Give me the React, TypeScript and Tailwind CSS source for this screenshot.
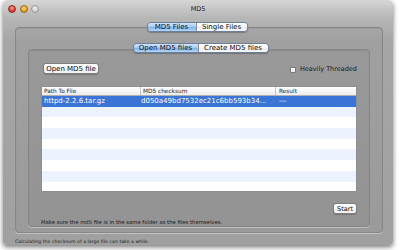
const rows = Array.from({ length: 9 }, (_, i) => i);

function Seg({ items, widths }: { items: string[]; widths: string[] }) {
  return (
    <div className="flex h-[10px] rounded-[4px] border border-[#6a7f9c] overflow-hidden shadow-[0_1px_1px_rgba(0,0,0,0.25)]">
      {items.map((t, i) => (
        <div
          key={t}
          className={
            i === 0
              ? `${widths[0]} flex items-center justify-center text-[7px] leading-[8px] text-[#111] bg-[linear-gradient(180deg,#d3e6fb_0%,#a7cdf4_45%,#82b6ec_55%,#b3d6f8_100%)]`
              : `${widths[1]} flex items-center justify-center text-[7px] leading-[8px] text-[#111] border-l border-[#8f8f8f] bg-[linear-gradient(180deg,#ffffff_0%,#f7f7f7_45%,#ececec_55%,#f7f7f7_100%)]`
          }
        >
          {t}
        </div>
      ))}
    </div>
  );
}

export default function App() {
  return (
    <div className="w-[400px] h-[250px] bg-white overflow-hidden font-['DejaVu_Sans',sans-serif] text-black">
      <div className="ml-[3px] w-[390px] h-[245px] rounded-t-[5px] rounded-b-[4px] shadow-[0_2px_5px_rgba(0,0,0,0.55)] bg-[linear-gradient(180deg,#d6d6d6_0px,#b6b6b6_18px,#a6a6a6_40px,#a0a0a0_100%)] flex flex-col">
        {/* title bar */}
        <div className="h-[18px] grid grid-cols-[1fr_auto_1fr] items-center">
          <div className="flex items-center gap-[3.5px] pl-[5px]">
            <div className="w-[8px] h-[8px] rounded-full border border-[#9a2a22] bg-[radial-gradient(circle_at_50%_35%,#f7a39a_0%,#e0463c_50%,#b8271e_100%)]" />
            <div className="w-[8px] h-[8px] rounded-full border border-[#a06a10] bg-[radial-gradient(circle_at_50%_35%,#fbe08a_0%,#eda42a_50%,#c87f10_100%)]" />
            <div className="w-[8px] h-[8px] rounded-full border border-[#9a9a9a] bg-[radial-gradient(circle_at_50%_35%,#f4f4f4_0%,#d0d0d0_60%,#b8b8b8_100%)]" />
          </div>
          <div className="text-[6.5px] leading-[8px] text-[#222]">MD5</div>
          <div />
        </div>

        {/* outer tabs */}
        <div className="mt-[4px] relative z-10 flex justify-center pr-[2px]">
          <Seg items={["MD5 Files", "Single Files"]} widths={["w-[48px]", "w-[51px]"]} />
        </div>

        {/* outer box */}
        <div className="mt-[-5px] ml-[12px] mr-[10px] h-[206px] rounded-[4px] border border-[#878787] bg-black/[0.035] shadow-[0_1px_0_rgba(255,255,255,0.35),inset_0_1px_1px_rgba(0,0,0,0.08)] flex flex-col">
          <div className="pt-[15px] relative z-10 flex justify-center pl-[3px]">
            <Seg items={["Open MD5 files", "Create MD5 files"]} widths={["w-[64px]", "w-[70px]"]} />
          </div>

          {/* inner box */}
          <div className="mt-[-4px] mx-[12px] h-[178px] rounded-[4px] border border-[#858585] bg-black/[0.04] shadow-[0_1px_0_rgba(255,255,255,0.35),inset_0_1px_1px_rgba(0,0,0,0.08)] flex flex-col px-[12px] pt-[13px]">
            <div className="flex items-center justify-between h-[11px]">
              <div className="ml-[2px] w-[56px] h-[11px] rounded-[3px] border border-[#7e7e7e] bg-[linear-gradient(180deg,#ffffff_0%,#f6f6f6_50%,#e9e9e9_51%,#f5f5f5_100%)] shadow-[0_1px_1px_rgba(0,0,0,0.2)] flex items-center justify-center text-[7px] leading-[8px] text-[#111]">
                Open MD5 file
              </div>
              <div className="flex items-center gap-[4px] mt-[2px]">
                <div className="w-[6px] h-[6px] rounded-[1px] border border-[#7a7a7a] bg-[linear-gradient(180deg,#ffffff,#e8e8e8)]" />
                <div className="text-[6.5px] leading-[7px] text-[#1a1a1a]">Heavily Threaded</div>
              </div>
            </div>

            {/* table */}
            <div className="mt-[12px] h-[106px] bg-white border border-[#8e8e8e] flex flex-col overflow-hidden">
              <div className="flex h-[9px] shrink-0 border-b border-[#b0b0b0] bg-[linear-gradient(180deg,#ffffff,#ededed)] text-[5.8px] leading-[8px] text-[#222]">
                <div className="w-[99px] pl-[2px] border-r border-[#c4c4c4]">Path To File</div>
                <div className="w-[135px] pl-[2px] border-r border-[#c4c4c4]">MD5 checksum</div>
                <div className="flex-1 pl-[3px]">Result</div>
              </div>
              {rows.map((i) => (
                <div
                  key={i}
                  className={
                    i === 0
                      ? "flex h-[10.7px] shrink-0 items-center bg-[#3a74d4] text-white text-[7px] leading-[9px]"
                      : i % 2 === 1
                      ? "h-[10.7px] shrink-0 bg-[#edf3fe]"
                      : "h-[10.7px] shrink-0 bg-white"
                  }
                >
                  {i === 0 && (
                    <>
                      <div className="w-[99px] pl-[2px]">httpd-2.2.6.tar.gz</div>
                      <div className="w-[135px] pl-[0px] whitespace-nowrap overflow-hidden">d050a49bd7532ec21c6bb593b34...</div>
                      <div className="flex-1 pl-[3px]">---</div>
                    </>
                  )}
                </div>
              ))}
            </div>

            <div className="mt-[11px] flex justify-end">
              <div className="w-[24px] h-[11px] rounded-[3px] border border-[#7e7e7e] bg-[linear-gradient(180deg,#ffffff_0%,#f6f6f6_50%,#e9e9e9_51%,#f5f5f5_100%)] shadow-[0_1px_1px_rgba(0,0,0,0.2)] flex items-center justify-center text-[6.5px] leading-[8px] text-[#111]">
                Start
              </div>
            </div>

            <div className="mt-[5px] h-[7px] text-[5.3px] leading-[7px] text-[#1a1a1a] whitespace-nowrap">
              Make sure the md5 file is in the same folder as the files themselves.
            </div>
          </div>
        </div>

        {/* footer */}
        <div className="pt-[6px] pl-[12px] text-[4.7px] leading-[5px] text-[#1a1a1a] whitespace-nowrap">
          Calculating the checksum of a large file can take a while.
        </div>
      </div>
    </div>
  );
}
